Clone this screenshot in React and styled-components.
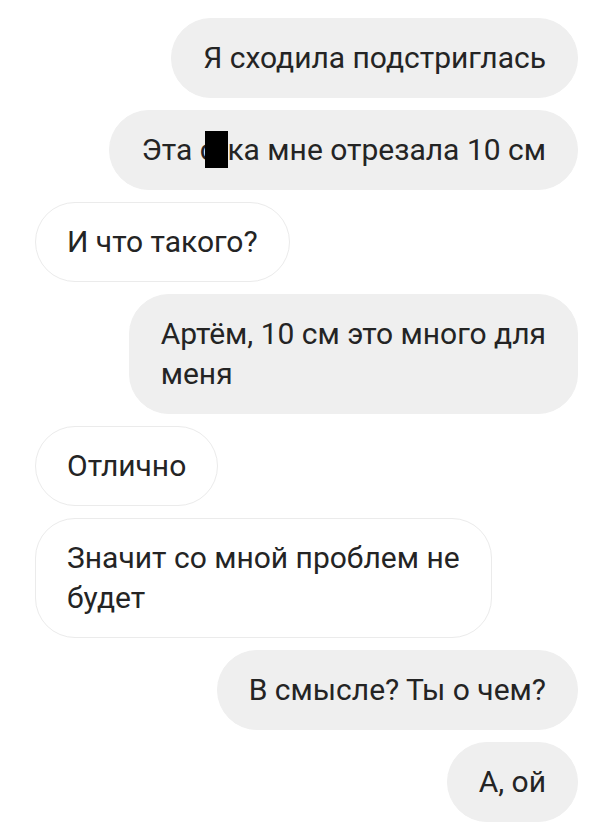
import React from 'react';
import styled, { createGlobalStyle } from 'styled-components';

const messages = [
    { mine: true, text: 'Я сходила подстриглась' },
    { mine: true, text: ['Эта с', 'у', 'ка мне отрезала 10 см'] },
    { mine: false, text: 'И что такого?' },
    { mine: true, text: 'Артём, 10 см это много для\nменя' },
    { mine: false, text: 'Отлично' },
    { mine: false, text: 'Значит со мной проблем не\nбудет' },
    { mine: true, text: 'В смысле? Ты о чем?' },
    { mine: true, text: 'А, ой' },
];

const App = () => {
    return (
        <>
            <GlobalStyle />
            <Thread>
                {messages.map((m, i) => (
                    <Bubble key={i} $mine={m.mine}>
                        {Array.isArray(m.text) ? (
                            <>
                                {m.text[0]}
                                <Censor>{m.text[1]}</Censor>
                                {m.text[2]}
                            </>
                        ) : m.text}
                    </Bubble>
                ))}
            </Thread>
        </>
    );
}

export default App;

const GlobalStyle = createGlobalStyle`
    html, body{
        margin: 0;
        padding: 0;
        background: #ffffff;
    }
    body{
        font-family: Roboto, "Noto Sans", sans-serif;
    }
`

const Thread = styled.div`
    width: 600px;
    height: 825px;
    box-sizing: border-box;
    padding: 18px 22px 0 35px;
    display: flex;
    flex-direction: column;
    gap: 12px;
    overflow: hidden;
`

const Bubble = styled.div`
    align-self: ${props => props.$mine ? 'flex-end' : 'flex-start'};
    box-sizing: border-box;
    padding: 19px 31px 19px 31px;
    border-radius: 40px;
    font-size: 30px;
    line-height: 40px;
    white-space: pre-line;
    color: #242424;
    background: ${props => props.$mine ? '#efefef' : '#ffffff'};
    border: 1.5px solid ${props => props.$mine ? '#efefef' : '#ebebeb'};
`

const Censor = styled.span`
    display: inline-block;
    width: 23px;
    height: 37px;
    margin-left: -10px;
    margin-right: -1px;
    vertical-align: -8px;
    background: #000;
    color: transparent;
    overflow: hidden;
`
